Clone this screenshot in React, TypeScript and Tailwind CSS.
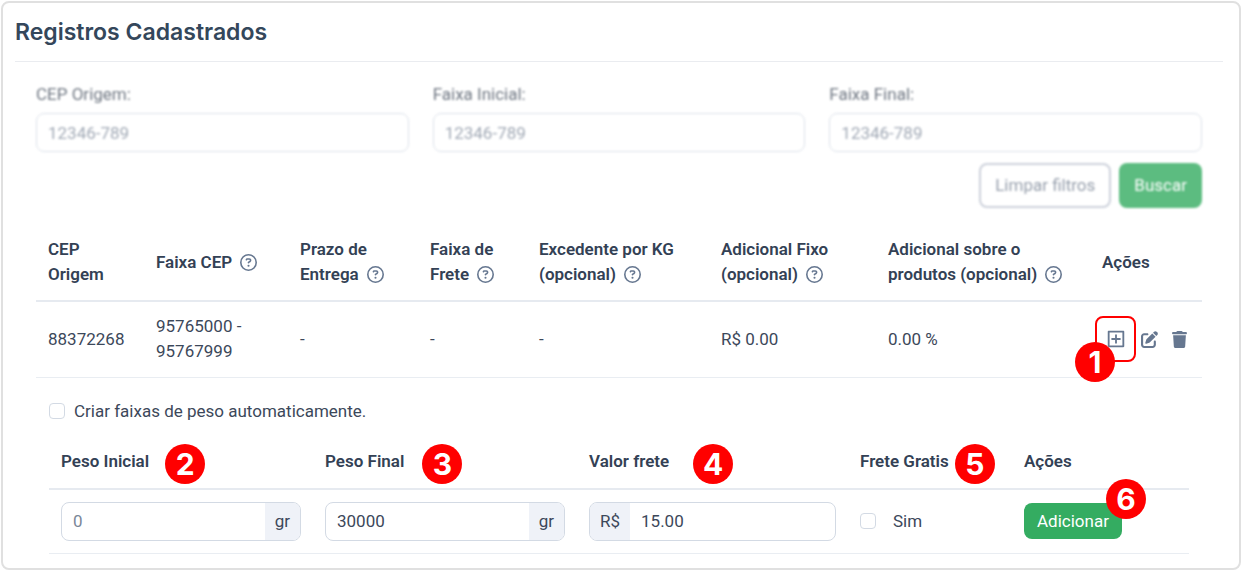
import { useState, type ReactNode } from "react"
import { FaRegCircleQuestion, FaPenToSquare, FaTrash } from "react-icons/fa6"
import { RiAddBoxLine } from "react-icons/ri"

const filters = [
  { id: "cep-origem", label: "CEP Origem:" },
  { id: "faixa-inicial", label: "Faixa Inicial:" },
  { id: "faixa-final", label: "Faixa Final:" },
]

const columns = [
  { lines: ["CEP", "Origem"], help: false, width: "w-[108px]" },
  { lines: ["Faixa CEP"], help: true, width: "w-[144px]" },
  { lines: ["Prazo de", "Entrega"], help: true, width: "w-[130px]" },
  { lines: ["Faixa de", "Frete"], help: true, width: "w-[109px]" },
  { lines: ["Excedente por KG", "(opcional)"], help: true, width: "w-[182px]" },
  { lines: ["Adicional Fixo", "(opcional)"], help: true, width: "w-[167px]" },
  { lines: ["Adicional sobre o", "produtos (opcional)"], help: true, width: "w-[214px]" },
  { lines: ["Ações"], help: false, width: "w-[112px]" },
]

function Badge({ className, children }: { className: string; children: ReactNode }) {
  return (
    <span
      className={`absolute z-10 flex size-10 items-center justify-center rounded-full bg-[#ff0000] font-[Inter,sans-serif] text-[30px] leading-none font-bold text-white ${className}`}
    >
      {children}
    </span>
  )
}

function Filters() {
  return (
    <form className="opacity-80 blur-[1px]" onSubmit={(e) => e.preventDefault()}>
      <div className="grid grid-cols-3 gap-6">
        {filters.map((f) => (
          <div key={f.id}>
            <label htmlFor={f.id} className="mb-1.5 block text-[#4b5563]">
              {f.label}
            </label>
            <input
              id={f.id}
              placeholder="12346-789"
              className="block h-[39px] w-full rounded-lg border border-[#d3dae4] px-[11px] placeholder:text-[#8a94a3]"
            />
          </div>
        ))}
      </div>
      <div className="mt-[11px] flex justify-end gap-2">
        <button type="reset" className="h-[45px] rounded-lg border-2 border-[#c0c6d2] px-3.5 text-[#7c8797]">
          Limpar filtros
        </button>
        <button type="submit" className="h-[45px] rounded-lg bg-[#34ac61] px-[15px] text-white">
          Buscar
        </button>
      </div>
    </form>
  )
}

function WeightRanges() {
  const [auto, setAuto] = useState(false)
  const [free, setFree] = useState(false)
  const [start, setStart] = useState("")
  const [end, setEnd] = useState("30000")
  const [price, setPrice] = useState("15.00")

  const group = "flex h-[39px] overflow-hidden rounded-lg border border-[#d3dae4]"
  const input = "min-w-0 flex-1 px-[11px] outline-none placeholder:text-[#7b8798]"
  const addon = "flex items-center bg-[#eff2f8] px-2.5"
  const checkbox = "size-4 appearance-none rounded border border-[#d3dae4] checked:bg-[#34ac61]"
  const th = "px-3 pt-2.5 pb-3.5 text-left font-semibold text-[#334155]"

  return (
    <div className="px-[13px] pt-[21px]">
      <label className="flex items-center gap-[9px]">
        <input type="checkbox" className={checkbox} checked={auto} onChange={(e) => setAuto(e.target.checked)} />
        Criar faixas de peso automaticamente.
      </label>
      <table className="mt-[15px] w-full table-fixed border-collapse">
        <thead>
          <tr className="border-b-2 border-[#e6eaf0]">
            <th className={`w-[264px] ${th}`}>
              <span className="relative inline-block">
                Peso Inicial<Badge className="-top-[5px] left-full ml-4">2</Badge>
              </span>
            </th>
            <th className={`w-[264px] ${th}`}>
              <span className="relative inline-block">
                Peso Final<Badge className="-top-[5px] left-full ml-[18px]">3</Badge>
              </span>
            </th>
            <th className={`w-[271px] ${th}`}>
              <span className="relative inline-block">
                Valor frete<Badge className="-top-[5px] left-full ml-6">4</Badge>
              </span>
            </th>
            <th className={`w-[164px] ${th}`}>
              <span className="relative inline-block">
                Frete Gratis<Badge className="-top-[5px] left-full ml-1.5">5</Badge>
              </span>
            </th>
            <th className={`w-[177px] ${th}`}>Ações</th>
          </tr>
        </thead>
        <tbody>
          <tr className="border-b border-[#e9edf2]">
            <td className="px-3 py-3">
              <div className={group}>
                <input aria-label="Peso Inicial" placeholder="0" className={input} value={start} onChange={(e) => setStart(e.target.value)} />
                <span className={addon}>gr</span>
              </div>
            </td>
            <td className="px-3 py-3">
              <div className={group}>
                <input aria-label="Peso Final" className={input} value={end} onChange={(e) => setEnd(e.target.value)} />
                <span className={addon}>gr</span>
              </div>
            </td>
            <td className="px-3 py-3">
              <div className={group}>
                <span className={addon}>R$</span>
                <input aria-label="Valor frete" className={input} value={price} onChange={(e) => setPrice(e.target.value)} />
              </div>
            </td>
            <td className="px-3 py-3">
              <label className="flex items-center gap-[17px]">
                <input type="checkbox" className={checkbox} checked={free} onChange={(e) => setFree(e.target.checked)} />
                Sim
              </label>
            </td>
            <td className="px-3 py-3">
              <span className="relative inline-block align-middle">
                <button type="button" className="block h-9 rounded-lg bg-[#34ac61] px-[13px] text-white">
                  Adicionar
                </button>
                <Badge className="-top-6 -right-6">6</Badge>
              </span>
            </td>
          </tr>
        </tbody>
      </table>
    </div>
  )
}

export default function App() {
  return (
    <div className="bg-white p-px font-[Roboto,sans-serif] text-[17px] leading-[25px] text-[#3c485a]">
      <section className="rounded-lg border-2 border-[#e0e0e0] pr-4 pb-3.5 pl-3">
        <h1 className="border-b border-[#eaecf0] pt-[17px] pb-4 font-[Inter,sans-serif] text-[23px] leading-[25px] font-semibold text-[#34475b]">
          Registros Cadastrados
        </h1>
        <div className="px-[21px] pt-5">
          <Filters />
          <table className="mt-4 w-full table-fixed border-collapse">
            <thead>
              <tr className="border-b-2 border-[#e6eaf0]">
                {columns.map((c) => (
                  <th key={c.lines[0]} className={`px-3 py-[13px] text-left align-middle font-semibold whitespace-nowrap text-[#334155] ${c.width}`}>
                    {c.lines.map((line, i) => (
                      <span key={line} className="flex items-center gap-2">
                        {line}
                        {c.help && i === c.lines.length - 1 && <FaRegCircleQuestion className="size-[17px] text-[#667790]" />}
                      </span>
                    ))}
                  </th>
                ))}
              </tr>
            </thead>
            <tbody>
              <tr className="h-[76px] border-b border-[#e9edf2]">
                <td className="px-3">88372268</td>
                <td className="px-3">
                  95765000 -<br />
                  95767999
                </td>
                <td className="px-3">-</td>
                <td className="px-3">-</td>
                <td className="px-3">-</td>
                <td className="px-3">R$ 0.00</td>
                <td className="px-3">0.00 %</td>
                <td className="pl-[5px]">
                  <div className="flex items-center text-[#667790]">
                    <div className="relative mr-[5px]">
                      <button
                        type="button"
                        aria-label="Adicionar faixa"
                        className="flex h-[46px] w-[41px] items-center justify-center rounded-lg border-2 border-[#ff0000]"
                      >
                        <RiAddBoxLine className="size-[22px]" />
                      </button>
                      <Badge className="-bottom-5 -left-5">1</Badge>
                    </div>
                    <button type="button" aria-label="Editar" className="mr-[13px]">
                      <FaPenToSquare className="size-[17px]" />
                    </button>
                    <button type="button" aria-label="Excluir">
                      <FaTrash className="size-[17px]" />
                    </button>
                  </div>
                </td>
              </tr>
            </tbody>
          </table>
          <WeightRanges />
        </div>
      </section>
    </div>
  )
}
